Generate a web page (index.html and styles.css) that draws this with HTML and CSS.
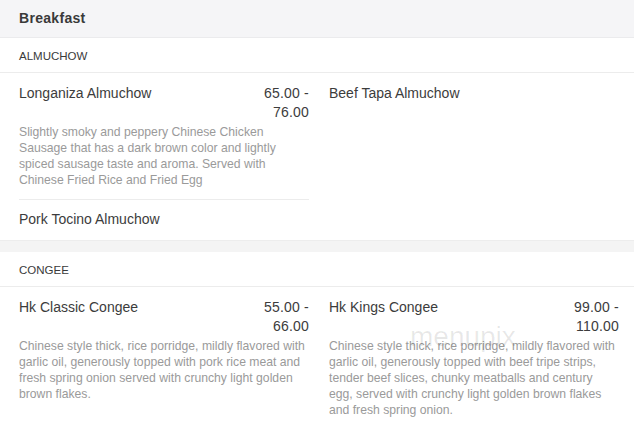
FILE: index.html
```html
<!DOCTYPE html>
<html>
<head>
<meta charset="utf-8">
<link rel="stylesheet" href="styles.css">
</head>
<body>
<div class="menu">
  <div class="cat-title">Breakfast</div>

  <div class="section">
    <div class="section-head">ALMUCHOW</div>
    <div class="items">
      <div class="col">
        <div class="item">
          <div class="item-top">
            <div class="name">Longaniza Almuchow</div>
            <div class="price">65.00 - 76.00</div>
          </div>
          <div class="desc">Slightly smoky and peppery Chinese Chicken Sausage that has a dark brown color and lightly spiced sausage taste and aroma. Served with Chinese Fried Rice and Fried Egg</div>
        </div>
        <div class="item">
          <div class="item-top">
            <div class="name">Pork Tocino Almuchow</div>
          </div>
        </div>
      </div>
      <div class="col">
        <div class="item">
          <div class="item-top">
            <div class="name">Beef Tapa Almuchow</div>
          </div>
        </div>
      </div>
    </div>
  </div>

  <div class="band"></div>

  <div class="section">
    <div class="section-head">CONGEE</div>
    <div class="items">
      <div class="col">
        <div class="item">
          <div class="item-top">
            <div class="name">Hk Classic Congee</div>
            <div class="price">55.00 - 66.00</div>
          </div>
          <div class="desc">Chinese style thick, rice porridge, mildly flavored with garlic oil, generously topped with pork rice meat and fresh spring onion served with crunchy light golden brown flakes.</div>
        </div>
      </div>
      <div class="col">
        <div class="item">
          <div class="item-top">
            <div class="name">Hk Kings Congee</div>
            <div class="price">99.00 - 110.00</div>
          </div>
          <div class="desc">Chinese style thick, rice porridge, mildly flavored with garlic oil, generously topped with beef tripe strips, tender beef slices, chunky meatballs and century egg, served with crunchy light golden brown flakes and fresh spring onion.</div>
        </div>
      </div>
    </div>
  </div>
  <div class="watermark">menupix</div>
</div>
</body>
</html>
```

FILE: styles.css
```css
html, body {
  margin: 0;
  padding: 0;
  background: #fff;
}
body {
  font-family: "Liberation Sans", Arial, Helvetica, sans-serif;
  color: #333;
  width: 634px;
  height: 423px;
  overflow: hidden;
}
.menu {
  position: relative;
}
.cat-title {
  height: 37px;
  line-height: 36px;
  padding: 0 19px;
  font-size: 14px;
  font-weight: bold;
  letter-spacing: 0.3px;
  color: #3a3a3a;
  background: #f5f5f7;
  border-bottom: 1px solid #ebebed;
}
.section-head {
  height: 34px;
  line-height: 37px;
  padding: 0 19px;
  font-size: 11.5px;
  color: #3a3a3a;
  border-bottom: 1px solid #ececec;
}
.items {
  display: grid;
  grid-template-columns: 1fr 1fr;
  column-gap: 20px;
  padding: 0 15px 0 19px;
}
.col {
  display: flex;
  flex-direction: column;
  min-width: 0;
}
.item {
  padding: 11px 0 11px;
}
.item + .item {
  border-top: 1px solid #ececec;
  padding-top: 10px;
}
.item-top {
  display: flex;
  justify-content: space-between;
  align-items: flex-start;
}
.name {
  font-size: 14px;
  line-height: 19px;
  color: #3c3c3c;
}
.price {
  font-size: 14px;
  line-height: 19px;
  letter-spacing: 0.2px;
  color: #3c3c3c;
  text-align: right;
  width: 56px;
  flex-shrink: 0;
}
.desc {
  margin-top: 2px;
  font-size: 12.2px;
  line-height: 16px;
  color: #9a9a9a;
}
.band {
  height: 11px;
  background: #f4f4f4;
  border-top: 1px solid #ededed;
}
.watermark {
  position: absolute;
  left: 410px;
  top: 323px;
  font-size: 28px;
  line-height: 28px;
  color: rgba(0, 0, 0, 0.09);
  pointer-events: none;
}
```
